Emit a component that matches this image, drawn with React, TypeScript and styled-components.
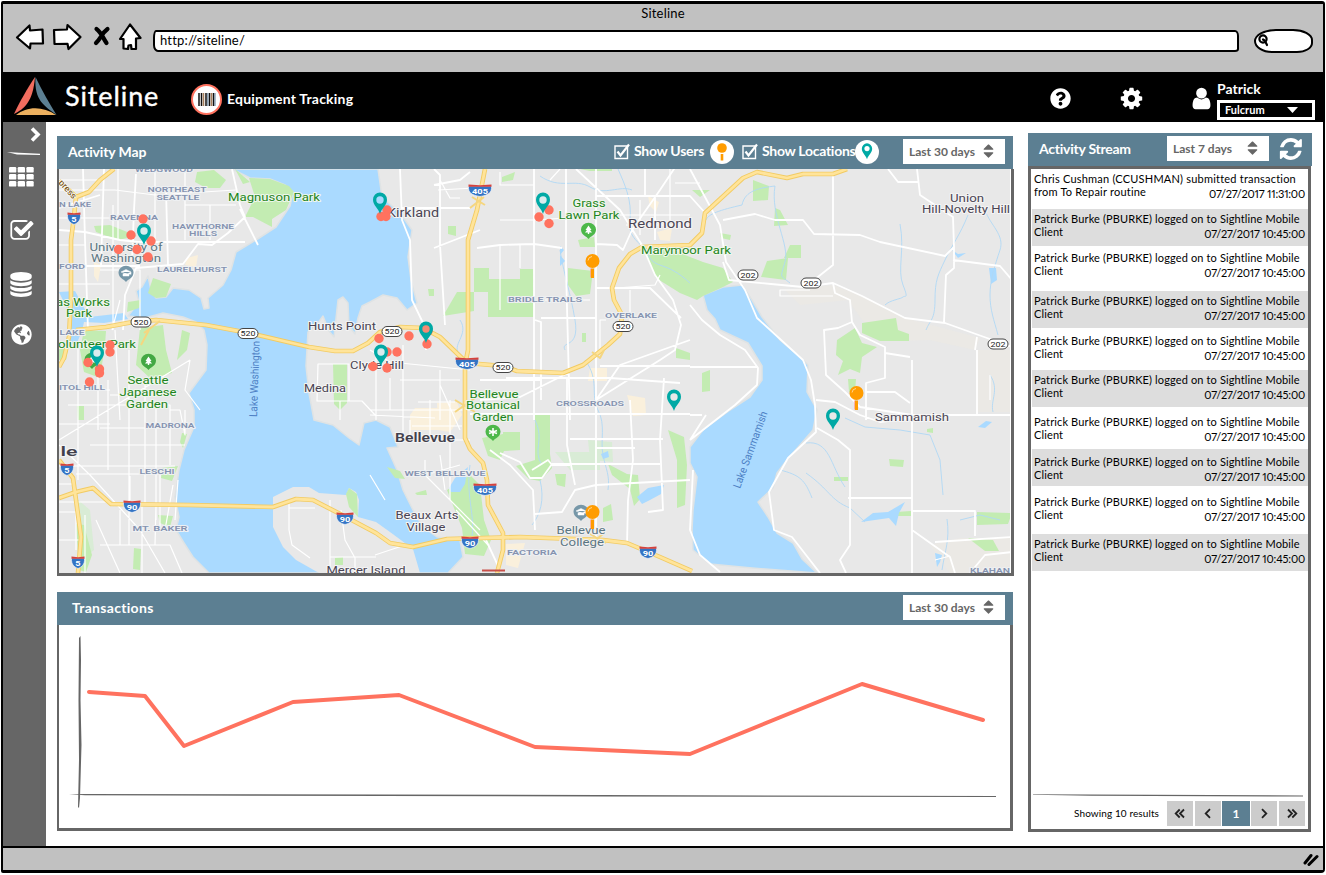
import React from "react";
import styled, { createGlobalStyle } from "styled-components";
import { FaQuestionCircle, FaGlobeAmericas } from "react-icons/fa";

const C = { steel: "#5c7f92", coral: "#ff725f", teal: "#00a9a5", orange: "#ff9c00", line: "#666", chrome: "#c1c1c1" };

const GlobalStyle = createGlobalStyle`
  * { box-sizing: border-box; }
  body { margin: 0; background: #fff; font-family: Lato, "Liberation Sans", sans-serif; color: #000; }
  svg { display: block; flex: none; }
`;

/* ---------- window chrome ---------- */
const Window = styled.div`
  width: 1326px; height: 875px; padding: 1px 0 2px 1px; overflow: hidden;
`;
const Frame = styled.div`
  width: 1324px; height: 872px; display: flex; flex-direction: column;
  border: solid #000; border-width: 3px 2px 3px 2px; border-radius: 2px 3px 4px 2px;
`;
const Chrome = styled.div`
  height: 68px; flex: none; background: ${C.chrome}; display: flex; flex-direction: column;
`;
const WindowTitle = styled.div`
  height: 19px; line-height: 18px; text-align: center; font-size: 13px; letter-spacing: 0.2px;
`;
const NavRow = styled.div`
  display: flex; align-items: center; height: 29px; padding: 0 9px 0 12px;
`;
const NavIcons = styled.div`
  margin-top: -2px;
`;
const UrlBar = styled.div`
  width: 1086px; height: 22px; margin: 6px 0 0 11px; padding-left: 5px;
  border: 2px solid #000; border-radius: 3px 4px 4px 5px / 8px 6px 3px 7px;
  background: #fff; font-size: 13px; line-height: 17px; letter-spacing: 0.2px;
`;
const SearchBox = styled.div`
  width: 59px; height: 24px; margin: 6px 0 0 15px; padding-left: 2px; display: flex; align-items: center;
  background: #fff; border: 2px solid #000; border-radius: 22px 20px 16px 18px / 12px 11px 10px 12px;
`;
const Header = styled.header`
  height: 50px; flex: none; background: #000; color: #fff; display: flex; align-items: center; padding-left: 11px;
`;
const Brand = styled.div`
  margin: -2px 0 0 8px; width: 126px; font-size: 27px; line-height: 34px; letter-spacing: 0.9px; -webkit-text-stroke: 0.4px #fff;
`;
const Badge = styled.div`
  width: 31px; height: 31px; margin-top: 5px; border-radius: 50%; background: #fff; border: 2px solid ${C.coral};
  display: flex; align-items: center; justify-content: center;
`;
const AppName = styled.div`
  margin: 2px 0 0 5px; width: 822px; font-size: 14px; font-weight: 700; letter-spacing: 0.2px;
`;
const HeaderIcon = styled.div<{ $gap: number }>`
  width: 22px; margin: 2px ${(p) => p.$gap}px 0 0; display: flex; justify-content: center;
`;
const Account = styled.div`
  width: 98px; display: flex; flex-direction: column; font-weight: 700; font-size: 14px; line-height: 18px; padding-top: 6px;
`;
const AccountSelect = styled.div`
  height: 20px; margin-top: 2px; padding: 0 14px 0 5px; border: 3px solid #fff; font-size: 11px;
  display: flex; align-items: center; justify-content: space-between;
`;
const Body = styled.div`
  flex: 1; display: flex; min-height: 0;
`;
const Sidebar = styled.nav`
  width: 43px; background: #666; color: #fff; display: flex; flex-direction: column; padding-left: 4px;
`;
const SideItem = styled.div<{ $top: number; $left?: number }>`
  margin-top: ${(p) => p.$top}px; margin-left: ${(p) => p.$left ?? 2}px;
`;
const StatusBar = styled.footer`
  height: 24px; flex: none; background: ${C.chrome}; border-top: 2.5px solid #000;
  display: flex; justify-content: flex-end; align-items: center; padding-right: 4px;
`;

/* ---------- panels ---------- */
const Main = styled.main`
  flex: 1; display: flex; gap: 15px; padding: 0 0 0 11px;
`;
const Column = styled.div`
  width: 956px; display: flex; flex-direction: column; gap: 16px; padding-top: 14px;
`;
const SideColumn = styled.div`
  width: 284px; padding-top: 11px;
`;
const Panel = styled.section<{ $h: number }>`
  height: ${(p) => p.$h}px; display: flex; flex-direction: column;
`;
const PanelHead = styled.div<{ $left: number; $right: number }>`
  height: 33px; flex: none; background: ${C.steel}; color: #fff; display: flex; align-items: center;
  padding: 0 ${(p) => p.$right}px 2px ${(p) => p.$left}px; font-size: 14px; font-weight: 700;
`;
const PanelTitle = styled.h2<{ $ls: number }>`
  margin: -1px 0 0; font-size: 14px; font-weight: 700; letter-spacing: ${(p) => p.$ls}px;
`;
const Grow = styled.div`
  flex: 1;
`;
const PanelBody = styled.div<{ $w?: string }>`
  flex: 1; width: ${(p) => p.$w ?? "auto"}; background: #fff; border: solid ${C.line}; border-width: 0 3px 3px 2px;
  display: flex; flex-direction: column;
`;
const StreamBody = styled(PanelBody)`
  border-width: 3px; width: 283px; min-height: 0;
`;
const Toggle = styled.label<{ $w: number }>`
  width: ${(p) => p.$w}px; display: flex; align-items: center; gap: 4px; white-space: nowrap;
  letter-spacing: -0.28px; line-height: 16px; margin-top: -1px;
`;
const Disc = styled.div<{ $mr: number }>`
  width: 24px; height: 24px; margin-right: ${(p) => p.$mr}px; border-radius: 50%; background: #fff;
  display: flex; align-items: center; justify-content: center; position: relative;
`;
const Range = styled.div`
  width: 102px; height: 25px; background: #fff; color: #666; padding: 0 11px 1px 6px; font-size: 12px;
  display: flex; align-items: center; justify-content: space-between; white-space: nowrap;
`;

/* ---------- activity stream ---------- */
const Entry = styled.div<{ $top: number; $shade: boolean; $ls: number }>`
  height: 37px; flex: none; margin: ${(p) => p.$top}px 0 0 1px; padding: 3px 3px 0 2px;
  background: ${(p) => (p.$shade ? "#ddd" : "#fff")}; font-size: 11px; line-height: 13px; white-space: nowrap;
  letter-spacing: ${(p) => p.$ls}px;
`;
const EntryLine = styled.div`
  display: flex; justify-content: space-between;
`;
const Stamp = styled.span`
  padding-top: 2px; letter-spacing: -0.18px; font-variant-numeric: proportional-nums;
`;
const Pager = styled.div`
  display: flex; align-items: center; gap: 2px; height: 25px; margin: 4px 3px 3px 0; font-size: 10px;
`;
const PagerText = styled.div`
  flex: 1; text-align: right; padding: 0 6px 2px 0; letter-spacing: 0.1px;
`;
const PageButton = styled.div<{ $on?: boolean }>`
  width: ${(p) => (p.$on ? 28 : 26)}px; margin: ${(p) => (p.$on ? "0 -1px" : "0")}; height: 25px; display: flex; align-items: center; justify-content: center;
  background: ${(p) => (p.$on ? C.steel : "#ccc")}; color: ${(p) => (p.$on ? "#fff" : "#222")}; font-size: 12px; font-weight: 700;
`;

/* ---------- icons ---------- */
const Glyph = ({ d, size, h, box = "0 0 1792 1792" }: { d: string; size: number; h?: number; box?: string }) => (
  <svg width={size} height={h ?? size} viewBox={box} fill="currentColor"><path d={d} /></svg>
);
const COG = "M1152 896q0-106-75-181t-181-75-181 75-75 181 75 181 181 75 181-75 75-181zm512-109v222q0 12-8 23t-20 13l-185 28q-19 54-39 91 35 50 107 138 10 12 10 25t-9 23q-27 37-99 108t-94 71q-12 0-26-9l-138-108q-44 23-91 38-16 136-29 186-7 28-36 28h-222q-14 0-24.5-8.5t-11.5-21.5l-28-184q-49-16-90-37l-141 107q-10 9-25 9-14 0-25-11-126-114-165-168-7-10-7-23 0-12 8-23 15-21 51-66.5t54-70.5q-27-50-41-99l-183-27q-13-2-21-12.5t-8-23.5v-222q0-12 8-23t19-13l186-28q14-46 39-92-40-57-107-138-10-12-10-24 0-10 9-23 26-36 98.5-107.5t94.5-71.5q13 0 26 10l138 107q44-23 91-38 16-136 29-186 7-28 36-28h222q14 0 24.5 8.5t11.5 21.5l28 184q49 16 90 37l142-107q9-9 24-9 13 0 25 10 129 119 165 170 7 8 7 22 0 12-8 23-15 21-51 66.5t-54 70.5q26 50 41 98l183 28q13 2 21 12.5t8 23.5z";
const USER = "M1536 1399q0 109-62.5 187t-150.5 78h-854q-88 0-150.5-78t-62.5-187q0-85 8.5-160.5t31.5-152 58.5-131 94-89 134.5-34.5q131 128 313 128t313-128q76 0 134.5 34.5t94 89 58.5 131 31.5 152 8.5 160.5zm-256-887q0 159-112.5 271.5t-271.5 112.5-271.5-112.5-112.5-271.5 112.5-271.5 271.5-112.5 271.5 112.5 112.5 271.5z";
const CHECK = "M1472 930v318q0 119-84.5 203.5t-203.5 84.5h-832q-119 0-203.5-84.5t-84.5-203.5v-832q0-119 84.5-203.5t203.5-84.5h832q63 0 117 25 15 7 18 23 3 17-9 29l-49 49q-10 10-23 10-3 0-9-2-23-6-45-6h-832q-66 0-113 47t-47 113v832q0 66 47 113t113 47h832q66 0 113-47t47-113v-254q0-13 9-22l64-64q10-10 23-10 6 0 12 3 20 8 20 29zm231-489l-814 814q-24 24-57 24t-57-24l-430-430q-24-24-24-57t24-57l110-110q24-24 57-24t57 24l263 263 647-647q24-24 57-24t57 24l110 110q24 24 24 57t-24 57z";
const DATABASE = "M896 768q237 0 443-43t325-127v170q0 69-103 128t-280 93.5-385 34.5-385-34.5-280-93.5-103-128v-170q119 84 325 127t443 43zm0 768q237 0 443-43t325-127v170q0 69-103 128t-280 93.5-385 34.5-385-34.5-280-93.5-103-128v-170q119 84 325 127t443 43zm0-384q237 0 443-43t325-127v170q0 69-103 128t-280 93.5-385 34.5-385-34.5-280-93.5-103-128v-170q119 84 325 127t443 43zm0-1152q208 0 385 34.5t280 93.5 103 128v128q0 69-103 128t-280 93.5-385 34.5-385-34.5-280-93.5-103-128v-128q0-69 103-128t280-93.5 385-34.5z";
const SORT = "M1408 1088q0 26-19 45l-448 448q-19 19-45 19t-45-19l-448-448q-19-19-19-45t19-45 45-19h896q26 0 45 19t19 45zm0-384q0 26-19 45t-45 19h-896q-26 0-45-19t-19-45 19-45l448-448q19-19 45-19t45 19l448 448q19 19 19 45z";
const REFRESH = "M1511 928q0 5-1 7-64 268-268 434.5t-478 166.5q-146 0-282.5-55t-243.5-157l-129 129q-19 19-45 19t-45-19-19-45v-448q0-26 19-45t45-19h448q26 0 45 19t19 45-19 45l-137 137q71 66 161 102t187 36q134 0 250-65t186-179q11-17 53-117 8-23 30-23h192q13 0 22.5 9.5t9.5 22.5zm25-800v448q0 26-19 45t-45 19h-448q-26 0-45-19t-19-45 19-45l138-138q-148-137-349-137-134 0-250 65t-186 179q-11 17-53 117-8 23-30 23h-199q-13 0-22.5-9.5t-9.5-22.5v-7q65-268 270-434.5t480-166.5q146 0 284 55.5t245 156.5l130-129q19-19 45-19t45 19 19 45z";

const SortIcon = () => <Glyph d={SORT} size={11} h={14} box="384 150 1024 1480" />;

const RangeSelect = ({ label }: { label: string }) => (
  <Range><span>{label}</span><SortIcon /></Range>
);

const CheckBox = () => (
  <svg width="16" height="17" viewBox="0 0 16 17" fill="none" stroke="#fff">
    <path d="M1 3H13.5V15.5H1Z" strokeWidth="1.4" />
    <path d="M3.5 8.5 6.5 12.5 15 1.5" strokeWidth="2.2" />
  </svg>
);

const PIN = "M0 0C-1.6-6-7-8.500-7-14.300A7 7.300 0 0 1 7-14.300C7-8.500 1.600-6 0 0Z";
const LocationPin = ({ x, y, hole = "#d8ecee" }: { x: number; y: number; hole?: string }) => (
  <g transform={`translate(${x} ${y})`}>
    <path d={PIN} fill={C.teal} />
    <circle cy="-14" r="3.700" fill={hole} />
  </g>
);
const UserPin = ({ x, y }: { x: number; y: number }) => (
  <g transform={`translate(${x} ${y})`}>
    <rect x="-2.200" y="7.500" width="1" height="9" fill="#ff9a8a" />
    <rect x="-1.500" y="7.500" width="3" height="9.500" fill={C.orange} />
    <circle r="7" fill={C.orange} />
    <path d="M-4.500-.5A4.500 4.500 0 0 1-.5-4.500" fill="none" stroke="#ffd591" strokeWidth="1" />
  </g>
);

/* ---------- map ---------- */
const LAKE_WASHINGTON =
  "M232 169 250 178 270 179 285 185 293 192 290 206 276 227 256 240 236 252 231 270 223 285 208 298 209 308 204 309 201 298 189 290 173 288 166 297 156 298 151 290 148 276 142 287 136 291 139 302 128 316 145 318 163 313 183 317 196 322 204 330 207 345 206 370 189 393 194 410 194 427 184 450 179 470 175 497 179 517 176 530 184 543 193 557 209 573 448 573 463 557 460 540 437 537 423 527 413 510 403 490 397 470 387 448 398 447 390 427 376 420 364 423 359 445 349 438 333 425 314 420 309 393 306 366 308 332 318 323 323 316 329 331 334 337 338 300 343 297 348 303 349 326 355 334 358 318 362 306 370 302 383 295 397 298 407 310 417 303 411 280 408 257 412 230 400 213 382 197 378 169Z";
const MERCER = "M273 497 293 487 309 487 319 493 346 495 349 488 356 492 359 500 358 517 376 522 390 532 413 549 420 573 319 573 296 560 283 547 273 527Z";
const SAMMAMISH =
  "M703 295 723 287 742 285 752 300 762 317 780 340 800 357 808 365 807 392 817 410 813 430 787 460 777 473 773 488 758 502 768 517 777 533 793 543 802 559 817 573 752 568 710 564 693 550 692 530 693 510 697 477 690 463 690 447 703 430 730 410 750 397 762 380 762 366 748 343 720 330 715 319 707 310Z";
const PONDS = [
  "M59 292 75 291 89 317 124 313 128 319 104 323 84 322 82 331 76 345 69 343 70 315Z",
  "M449 488 455 478 468 467 465 484 460 492 451 492Z",
  "M637 497 648 488 664 485 661 494 650 500 642 504Z",
  "M861 522 873 513 888 512 905 502 899 513 896 526 889 518Z",
  "M978 427 986 421 992 422 985 428Z", "M989 268 996 268 997 280 991 284Z", "M952 250 958 254 966 253 958 258Z",
  "M935 553 942 555 940 562 937 567Z", "M601 454 608 451 609 457 603 459Z", "M560 246 564 250 560 255 565 261 560 266Z",
];
const GREENS = [
  "M249 178 270 179 289 186 294 192 286 210 272 219 272 227 253 217 245 217 255 197Z", "M197 172 214 170 226 180 220 188 206 188 195 182Z",
  "M235 169 250 182 243 184Z", "M94 226 110 225 137 236 118 240 96 232Z", "M153 278 171 284 166 297 156 298 148 293Z",
  "M128 302 141 300 139 308 127 312Z", "M84 330 106 331 105 345 100 378 84 372 80 350Z", "M140 328 163 325 166 350 172 373 151 379 136 365Z",
  "M182 330 190 333 187 350 177 360 180 343Z", "M59 349 68 349 66 360 59 360Z", "M77 406 84 406 84 420 78 420Z", "M182 433 187 434 183 448 180 442Z",
  "M162 468 178 466 172 481 161 478Z", "M158 515 173 516 170 527 160 523Z", "M76 524 84 525 92 555 86 572 79 570Z", "M134 548 141 549 140 570 133 569Z",
  "M333 364 347 364 347 403 340 410 334 404Z", "M346 494 349 488 357 494 358 517 349 507Z", "M335 558 343 557 343 565 335 565Z",
  "M474 268H489V279H520V269H534V317H488V292H474Z", "M457 292 474 292 474 311 443 316Z", "M568 268 593 271 590 294 576 296 568 285Z",
  "M502 177 515 172 513 180 502 182Z", "M448 226 456 226 456 236 448 234Z", "M578 240 594 237 595 247 580 247Z", "M580 169H612V171H590Z",
  "M535 415H550V454L552 468 540 481 529 479 516 466 535 460Z", "M482 438 503 434 503 432 520 432 520 450 504 451 500 460 488 456Z",
  "M447 490 470 475 480 485 484 520 491 540 484 556 465 554 462 528 454 508Z", "M603 508 611 504 613 520 603 522Z",
  "M608 464 627 474 638 475 640 499 634 506 630 489 612 475Z", "M668 430 684 437 687 465 685 505 677 508 677 460Z", "M555 474 566 474 565 487 557 485Z",
  "M643 249 662 245 685 255 703 262 723 268 733 282 723 287 703 296 697 300 680 293 656 278Z", "M753 180 769 186 768 200 753 201Z",
  "M767 261 788 258 786 280 761 277Z", "M775 208 780 210 788 225 774 226Z", "M790 245 801 245 801 258 784 258Z",
  "M692 190 710 190 700 197Z", "M720 233 731 235 730 240 721 238Z", "M862 323 896 318 898 330 909 334 909 341 880 341 862 333Z",
  "M837 340 855 328 862 343 877 347 862 357 860 373 850 369 838 375 843 361 836 355Z", "M848 379 856 379 855 393 849 392Z",
  "M889 459 904 460 903 467 890 466Z", "M896 512 911 511 911 516 896 516Z", "M977 512 1012 513 1008 524 977 525Z", "M968 538 993 540 999 551 985 551Z",
  "M702 373 710 370 710 391 702 392Z", "M834 477 848 477 848 481 834 481Z", "M927 429 933 428 933 433 927 432Z",
  "M676 348 690 353 690 360 676 358Z", "M428 289 434 289 434 296 429 296Z", "M582 333H586V342H582Z", "M387 467 400 471 405 479 395 478Z", "M415 493 426 490 427 495 417 495Z",
];
const SANDS = ["M415 408H440V430H410V415ZM437 403 457 402 462 415 450 432 438 430Z", "M590 368H607V381H588ZM627 395 645 398 646 415 633 416Z", "M506 544 525 543 518 568 506 565Z",
  "M648 196 659 202 656 212 650 206ZM657 232 672 228 670 241 660 240Z", "M94 262 101 265 98 282 94 276Z", "M315 511 330 511 338 521 328 524Z", "M187 258 198 255 196 267 185 265Z"];
const STREAMS = "M540 176C560 190 575 178 590 187S620 185 632 190M618 169C625 185 632 200 630 220S640 240 648 255 665 260 690 283M742 205C745 190 760 188 775 186M742 205C720 210 708 214 706 220M775 186C770 215 790 245 785 262S780 275 790 283M900 224C905 250 897 270 903 285S905 295 903 297 890 300 885 305M968 215C960 235 952 245 945 260S935 280 935 300 930 320 926 330M985 210C990 225 1005 235 1000 250S990 280 990 295 994 320 998 335M845 418 865 427 900 430 930 435 940 460 943 495M806 443C830 440 830 465 845 487M780 470C800 475 805 480 812 498M806 473C830 490 830 500 850 508L865 522M535 420C545 440 532 450 542 465M460 320C470 335 450 345 460 355M560 250C565 280 570 290 575 320S560 340 565 350M585 360C600 380 590 395 598 410S600 440 603 455 610 475 608 490M1000 520 980 515 960 520M540 480C545 500 540 515 532 525M470 465C465 500 478 520 470 545M947 519C950 540 945 550 942 570M990 375C1000 390 990 400 993 412";
const ROADS_MAJOR =
  "M59 208 100 195 M232 169 240 205 245 217 228 233 212 245 198 244 183 264 136 268 125 295 123 330 M83 169 85 240 88 330 M59 230 85 232 120 240 138 242 245 242 M240 209 258 245 M136 174 134 210 132 262 M59 266 140 266 M166 190 168 265 M104 169 101 265" +
  "M480 230 434 248 M400 169 402 220 410 240 412 300 424 325 426 350 M402 208H470 M434 169 440 175 440 245 445 325 M434 185 460 180 470 172 M477 248 500 245 534 244 562 248 M534 169V420 M535 320 541 322 541 400 M566 169V270L570 420 M596 169V540 M541 318H596V220 M596 244 617 245 623 250 632 230 660 190 680 160" +
  "M596 288H650L681 318 M576 169 620 210 642 245 655 275 673 300 681 325 675 350 660 360 596 400 M690 169 720 225 726 262 745 290 757 318 803 360 811 380 815 405 816 432 788 458 769 492 774 530 792 537 820 573" +
  "M596 196 690 196 707 215 M645 169V196 M655 196V240 M660 250 640 245 M723 262 729 280 771 284 803 287 833 283 862 296 905 318 945 323 987 338 1012 347" +
  "M723 220 755 214 775 220H803L814 234 860 235 880 242 945 256 954 247 953 217 920 195 917 169 M833 175V265L814 280 M954 247V268L946 275 944 322 M888 169 898 182H919 M953 260 1000 266 1012 280 M833 283 835 293 850 300 852 322 838 328 824 330 826 375 845 392 860 407 912 415 M852 322 860 335 885 347 885 378 866 383 866 420 M866 392H895L910 403 M912 360V573 M885 353 910 357 M912 415H1012 M977 350V416 M977 337 975 350 M848 498H912 M846 573 840 560 850 545V450L838 440 817 428 M816 400 835 402 860 415 880 422 912 418 M912 511H975V536 M912 530 950 557 955 573 M935 542 1012 537 M970 573 985 555 1012 552" +
  "M690 367H758 M690 415H702 M690 440 706 415 M690 305 702 320 720 335 745 350 758 368 757 385 735 405 690 440 M693 470 690 530 700 555 720 572" +
  "M470 414H690 M506 378H610L680 383 M480 400 520 397 570 372 M596 400 620 365 690 340 M664 378 660 440 663 510 648 512 M630 400 633 460 628 500 627 545 M535 514 562 512 575 490 596 485 690 480 M532 470 548 460 552 465H570 M567 378V445L575 485 M500 453 520 462 530 478 542 478 552 464H660 M570 439H663 M535 530 533 490 510 465 490 450 M486 540 500 570 M596 448H635 M690 366H600 M480 380H540";
const ROADS_MINOR =
  "M59 190H115L155 195 236 190 M59 218H150 M155 169V240 M185 169V240 M185 205H236 M210 205V240 M118 169V240 M59 180H100M113 205V330 M59 245H85 M100 270H140V330 M59 284H110 M120 300 112 330" +
  "M59 440 190 360 M59 424H110 M68 405H170V465 M78 345V480 M98 365V430 M115 330 120 420 M129 350V545 M145 380V505 M156 405V520 M100 428H190 M59 466H175 M76 474H160V530 M59 484H76 M59 502H110 M130 476V500 M120 510V545 M142 505V573 M156 505 155 545 M170 410H180L185 435V410 M100 545H170L182 573 M96 520 120 573 M59 445 90 475 140 530 165 573 M59 512H76V550 M59 540H80 M85 515V573 M108 380V470 M59 390H110 M190 360 185 390 200 410 M178 480 175 520 M90 445H185 M110 395H140 M173 485 165 530" +
  "M318 364H349V401H317Z M349 401H362L376 416 M376 380V420 M340 401V420 M289 500V530L292 545 310 558 M330 500V573 M341 510 345 540 355 558V573 M289 508H315 M330 557H376 M376 350V420 M390 378V410 M403 345V440 M370 350 390 362 470 370 M370 410H470 M410 420V440H470 M430 400V440 M440 370V420 M450 400V500 M370 415 435 418 M425 460V475L445 495 480 530 M440 455 445 490 M370 475 385 500 M425 475 460 465 M440 385 460 430 M400 380H460 M418 402H455 M412 426H462 M456 510 488 545 M375 555 405 545 M550 180 560 169 M440 180 450 198H460 M438 190 475 188" +
  "M500 172V185H534 M500 220H534 M534 220 566 218 M500 245V310 M520 268V244 M606 320H600V350 M617 288 655 285 660 275 M640 200V235 M620 215H690 M626 225H690 M670 169V220 M990 375V400 M935 560 950 556 M675 183H700 M810 290H780V296H833 M630 290V325 M545 300H590";

type LabelProps = { x: number; y: number; w: number; t: string; k: "area" | "town" | "park" | "poi" | "city"; s?: number };
const LABEL_STYLE = {
  area: { fill: "#8593b0", weight: 600, size: 8, halo: "#eef0f2" },
  town: { fill: "#4a4453", weight: 400, size: 11, halo: "#f4f4f4" },
  park: { fill: "#1e8421", weight: 400, size: 11, halo: "#eef6ec" },
  poi: { fill: "#5b7683", weight: 400, size: 11, halo: "#f0f0f0" },
  city: { fill: "#42404c", weight: 600, size: 13.5, halo: "#f4f4f4" },
};
const LABELS: LabelProps[] = [
  { x: 164, y: 172, w: 58, t: "WEDGWOOD", k: "area" }, { x: 177, y: 192, w: 59, t: "NORTHEAST", k: "area" }, { x: 178, y: 200, w: 43, t: "SEATTLE", k: "area" },
  { x: 75, y: 207, w: 32, t: "N LAKE", k: "area" }, { x: 134, y: 220, w: 48, t: "RAVENNA", k: "area" }, { x: 203, y: 228.500, w: 62, t: "HAWTHORNE", k: "area" },
  { x: 203, y: 236, w: 28, t: "HILLS", k: "area" }, { x: 72, y: 269, w: 26, t: "FORD", k: "area" }, { x: 192, y: 272, w: 70, t: "LAURELHURST", k: "area" },
  { x: 72, y: 335, w: 25, t: "LAKE", k: "area" }, { x: 82, y: 390, w: 46, t: "ITOL HILL", k: "area" }, { x: 170, y: 428, w: 49, t: "MADRONA", k: "area" },
  { x: 157, y: 473.500, w: 35, t: "LESCHI", k: "area" }, { x: 160, y: 531, w: 55, t: "MT. BAKER", k: "area" }, { x: 545, y: 302, w: 74, t: "BRIDLE TRAILS", k: "area" },
  { x: 631, y: 318, w: 52, t: "OVERLAKE", k: "area" }, { x: 590, y: 406, w: 68, t: "CROSSROADS", k: "area" }, { x: 445, y: 476, w: 81, t: "WEST BELLEVUE", k: "area" },
  { x: 532, y: 555, w: 50, t: "FACTORIA", k: "area" }, { x: 990, y: 573, w: 40, t: "KLAHAN", k: "area" },
  { x: 126, y: 251, w: 73, t: "University of", k: "poi" }, { x: 126, y: 262, w: 70, t: "Washington", k: "poi" },
  { x: 581, y: 534, w: 49, t: "Bellevue", k: "poi" }, { x: 582, y: 545.500, w: 44, t: "College", k: "poi" },
  { x: 274, y: 201, w: 92, t: "Magnuson Park", k: "park" }, { x: 83, y: 305.500, w: 54, t: "as Works", k: "park" }, { x: 79, y: 317, w: 26, t: "Park", k: "park" },
  { x: 97, y: 348, w: 78, t: "olunteer Park", k: "park" }, { x: 148, y: 384, w: 41, t: "Seattle", k: "park" }, { x: 148, y: 396, w: 57, t: "Japanese", k: "park" }, { x: 147, y: 407.500, w: 42, t: "Garden", k: "park" },
  { x: 589, y: 207, w: 33, t: "Grass", k: "park" }, { x: 589, y: 219, w: 61, t: "Lawn Park", k: "park" }, { x: 686, y: 254, w: 90, t: "Marymoor Park", k: "park" },
  { x: 494, y: 397.500, w: 49, t: "Bellevue", k: "park" }, { x: 493, y: 409, w: 54, t: "Botanical", k: "park" }, { x: 493, y: 420.500, w: 41, t: "Garden", k: "park" },
  { x: 413, y: 217, w: 52, t: "Kirkland", k: "town", s: 12 }, { x: 660, y: 227.500, w: 64, t: "Redmond", k: "town", s: 12 }, { x: 967, y: 202, w: 34, t: "Union", k: "town" },
  { x: 966, y: 213, w: 88, t: "Hill-Novelty Hill", k: "town" }, { x: 342, y: 330, w: 68, t: "Hunts Point", k: "town" }, { x: 377, y: 368.500, w: 54, t: "Clyde Hill", k: "town" },
  { x: 325, y: 392, w: 42, t: "Medina", k: "town" }, { x: 912, y: 421, w: 74, t: "Sammamish", k: "town" }, { x: 427, y: 519, w: 63, t: "Beaux Arts", k: "town" },
  { x: 426, y: 531, w: 39, t: "Village", k: "town" }, { x: 366, y: 574, w: 79, t: "Mercer Island", k: "town" },
  { x: 425, y: 442, w: 60, t: "Bellevue", k: "city" }, { x: 69, y: 456, w: 17, t: "le", k: "city" },
];
const MapLabel = ({ x, y, w, t, k, s }: LabelProps) => {
  const st = LABEL_STYLE[k];
  return (
    <text x={x} y={y} textLength={w} lengthAdjust="spacingAndGlyphs" textAnchor="middle" fontSize={s ?? st.size} fontWeight={st.weight}
      fill={st.fill} stroke={st.halo} strokeWidth="2" paintOrder="stroke" strokeLinejoin="round">{t}</text>
  );
};
const Interstate = ({ x, y, n }: { x: number; y: number; n: string }) => {
  const w = n.length === 3 ? 11.500 : n.length === 2 ? 8.500 : 6.500;
  return (
    <g transform={`translate(${x} ${y})`}>
      <path d={`M${-w}-4H${w}C${w + 0.5} 3 ${w - 3} 5 0 6.500C${3 - w} 5 ${-w - 0.5} 3 ${-w}-4Z`} fill="#3474c4" stroke="#fff" strokeWidth=".6" />
      <path d={`M${-w}-3.300V-5.500L0-4.800 ${w}-5.500V-3.300Z`} fill="#d6413c" />
      <text y="3.800" textAnchor="middle" fontSize="8" fontWeight="700" fill="#fff" textLength={n.length * 5.300} lengthAdjust="spacingAndGlyphs">{n}</text>
    </g>
  );
};
const StateRoute = ({ x, y, n }: { x: number; y: number; n: string }) => (
  <g transform={`translate(${x} ${y})`}>
    <rect x="-10" y="-5" width="20" height="10" rx="5" fill="#fff" stroke="#444" />
    <text y="2.800" textAnchor="middle" fontSize="8" fill="#222" textLength="15" lengthAdjust="spacingAndGlyphs">{n}</text>
  </g>
);
const Poi = ({ x, y, fill, kind }: { x: number; y: number; fill: string; kind: "tree" | "school" | "flower" }) => (
  <g transform={`translate(${x} ${y})`}>
    <path d="M0 9C-2 6-7.500 5-7.500-.5A7.500 6.800 0 0 1 7.500-.5C7.500 5 2 6 0 9Z" fill={fill} />
    {kind === "tree" && <path d="M0-4.500 3 0H1.500L3.500 2.500H.7V4H-.7V2.500H-3.500L-1.500 0H-3Z" fill="#fff" />}
    {kind === "school" && <path d="M-5-1 0-3.500 5-1V1.500M-5-1 0 1.500 5-1M-3 1V3H3V1Z" fill="#fff" stroke="#fff" strokeWidth=".5" />}
    {kind === "flower" && <path d="M0-4V4M-4-1.500 4 1.500M-4 1.500 4-1.500" stroke="#fff" strokeWidth="1.600" />}
  </g>
);

const HIGHWAYS = [
  "M59 181 76 197 74 217 71 240 71 297 69 337 64 358 59 367", "M76 197 89 192 100 180 114 169",
  "M59 460 73 478 76 500 81 537 78 573",
  "M76 330 106 327 133 322 156 320 206 325 249 333 309 347 335 351 353 351 368 343 380 332 400 327 423 328 440 337 467 363",
  "M467 363 503 366 517 371 563 373 583 365 608 345 620 334 622 315 614 300 612 288 619 268 630 254 642 247 690 245 702 233 705 213 743 178 757 172 787 178 803 174 833 174 847 169",
  "M485 169 477 210 468 240 468 350 465 365 465 438 470 449 483 463 487 480 488 505 503 533 503 550 497 573",
  "M59 498 76 492 93 488 111 504 189 505 273 507 296 499 313 500 346 517 376 533 390 543 413 547 447 539 520 537 603 540 627 543 660 557 692 571",
];
const DOTS = [[143, 219], [131, 235], [151, 241], [118.500, 249.500], [137, 249.500], [148, 257], [110, 345], [110, 352], [88, 362.500], [99.500, 369], [99.500, 373], [89.500, 382],
  [387, 210], [381, 216.500], [386, 216.500], [549, 210], [539, 217], [549, 223.500], [428, 331], [409, 336], [427, 344], [379, 338.500], [387, 352], [397, 352], [373, 366.500], [387, 368]];

const ActivityMap = () => (
  <svg width="951" height="404" viewBox="59 169 951 404" fontFamily="Roboto, sans-serif" strokeLinejoin="round">
    <rect x="59" y="169" width="953" height="404" fill="#e8e8e8" />
    <path d="M785 290 833 285 862 296 905 318 980 338 975 350 930 340 897 341 862 320 848 300 800 305Z" fill="#ebe9e5" />
    <path d="M977 350H1012V412H977ZM930 545 960 538H1012V573H950Z" fill="#ebe9e5" />
    <path d="M555 452H600V470H570ZM588 440 612 442 613 462 590 460ZM76 498 90 510 94 550 82 560Z" fill="#d9ecd6" />
    {SANDS.map((d) => <path key={d} d={d} fill="#faf0dc" />)}
    <g fill="#aadaff" stroke="#dfe3e4" strokeWidth="1.500">
      <path d={LAKE_WASHINGTON} /><path d={SAMMAMISH} />
    </g>
    <path d={MERCER} fill="#e8e8e8" />
    {GREENS.map((d) => <path key={d} d={d} fill="#c3ecb2" />)}
    {PONDS.map((d) => <path key={d} d={d} fill="#aadaff" />)}
    <path d={STREAMS} fill="none" stroke="#b0d8f5" strokeWidth=".9" />
    <path d={ROADS_MINOR} fill="none" stroke="#fff" strokeWidth="1.200" />
    <path d={ROADS_MAJOR} fill="none" stroke="#fff" strokeWidth="1.800" />
    {HIGHWAYS.map((d) => <path key={d} d={d} fill="none" stroke="#f2cb63" strokeWidth="4.600" />)}
    {HIGHWAYS.map((d) => <path key={d} d={d} fill="none" stroke="#ffe49a" strokeWidth="2.800" />)}
    <path d="M144 333 160 321M141 345 149 330M592 352 600 358 604 350M455 400 475 412M455 412 475 398M472 197 485 205M484 197 470 208M590 534 606 543M604 533 590 545" stroke="#f5d67f" strokeWidth="2" fill="none" />
    {LABELS.map((l) => <MapLabel key={`${l.t}${l.x}${l.y}`} {...l} />)}
    <text transform="translate(58 183) rotate(48)" fontSize="9" fill="#7c5a1c" fontWeight="500" stroke="#fff" strokeWidth="1.500" paintOrder="stroke">press</text>
    <g fill="#4d7fc4" fontSize="11">
      <text transform="translate(257 417) rotate(-88)" textLength="76" lengthAdjust="spacingAndGlyphs">Lake Washington</text>
      <text transform="translate(740 489) rotate(-70)" textLength="81" lengthAdjust="spacingAndGlyphs">Lake Sammamish</text>
    </g>
    <Interstate x={74} y={218} n="5" /><Interstate x={67} y={469} n="5" /><Interstate x={78} y={562} n="5" />
    <Interstate x={132} y={506} n="90" /><Interstate x={345} y={518} n="90" /><Interstate x={470} y={542} n="90" /><Interstate x={648} y={552} n="90" />
    <Interstate x={480} y={190} n="405" /><Interstate x={467} y={363} n="405" /><Interstate x={485} y={489} n="405" />
    <path d="M482 570.500H505" stroke="#c9504a" strokeWidth="2" />
    <StateRoute x={141} y={322} n="520" /><StateRoute x={248} y={333.500} n="520" /><StateRoute x={392} y={331.500} n="520" /><StateRoute x={503} y={367.500} n="520" />
    <StateRoute x={623} y={326.500} n="520" /><StateRoute x={748} y={275} n="202" /><StateRoute x={811} y={283} n="202" /><StateRoute x={998} y={344} n="202" />
    <Poi x={126} y={273} fill="#7697a8" kind="school" /><Poi x={581} y={512} fill="#7697a8" kind="school" />
    <Poi x={148.500} y={361} fill="#43a843" kind="tree" /><Poi x={92} y={360} fill="#43a843" kind="tree" /><Poi x={588.500} y={230} fill="#4db84a" kind="tree" />
    <Poi x={493} y={432} fill="#4db84a" kind="flower" />
    {DOTS.map(([x, y]) => <circle key={`${x}-${y}`} cx={x} cy={y} r="4.700" fill={C.coral} />)}
    <LocationPin x={144} y={245} /><LocationPin x={97} y={367} /><LocationPin x={380} y={214} hole="#aadaff" /><LocationPin x={543} y={214} />
    <LocationPin x={426} y={343} hole="#f58a73" /><LocationPin x={381} y={366} /><LocationPin x={674} y={411} hole="#e8e8e8" /><LocationPin x={833} y={430} hole="#e8e8e8" />
    <UserPin x={592.500} y={261} /><UserPin x={856.500} y={393} /><UserPin x={592.500} y={512} />
  </svg>
);

const TransactionsChart = () => (
  <svg width="951" height="203" viewBox="59 625 951 203" fill="none">
    <path d="M79 638 80.500 636 81 660 80.500 700 81.500 745 80.500 780 80 798 79 808 78 807 79 760 78.500 700Z" fill={C.line} />
    <path d="M69 794.300 85 794 250 794.300 600 795 996 796V797L600 796.500 250 795.700 85 795.200Z" fill={C.line} />
    <path d="M89 692 145 696 184 746 293 702 399 695 535 747 690 754 862 684 983 720" stroke={C.coral} strokeWidth="4" strokeLinecap="round" strokeLinejoin="round" />
  </svg>
);

const BurkeEntry = { lines: ["Patrick Burke (PBURKE) logged on to Sightline Mobile", "Client"], time: "07/27/2017 10:45:00", ls: 0.13 };
const GAPS = [3, 2, 6, 3, 2, 5, 0, 6, 5];
const ENTRIES = [
  { lines: ["Chris Cushman (CCUSHMAN) submitted transaction", "from To Repair routine"], time: "07/27/2017 11:31:00", ls: 0.21, gap: 0 },
  ...GAPS.map((gap) => ({ ...BurkeEntry, gap })),
];
const EntryText = styled.div<{ $drop: number }>`
  padding-top: ${(p) => p.$drop}px;
`;

const Chevrons = ({ dir, n }: { dir: 1 | -1; n: 1 | 2 }) => (
  <svg width="12" height="11" viewBox="-6 -5.500 12 11" fill="none" stroke="#222" strokeWidth="1.800">
    <g transform={`scale(${dir} 1)`}>
      {n === 2 ? <path d="M-4-4 0 0-4 4M.3-4 4.300 0 .3 4" /> : <path d="M-2-4.300 2.300 0-2 4.300" />}
    </g>
  </svg>
);

export default function App() {
  return (
    <Window>
      <GlobalStyle />
      <Frame>
        <Chrome>
          <WindowTitle>Siteline</WindowTitle>
          <NavRow>
            <NavIcons>
              <svg width="127" height="30" viewBox="15 22 127 30" fill="#fff" stroke="#000" strokeWidth="2.200" strokeLinejoin="round" strokeLinecap="round">
                <path d="M17 37.500 29.500 25.500 30 30.500 42.500 29.500 43 43.500 30.500 43.500 30 48.500Z" />
                <path d="M54 30 67 29.500 67.500 25 80.500 37 68.500 49 67.500 43.800 54.500 44Z" />
                <path d="M96.500 29C101 32 103 38 106.500 43M107.500 29C102 33 101 38 96 43" strokeWidth="4.200" />
                <path d="M130 24.500 140.500 38 136 38.500 136 49 131.500 49 131 45 128.500 45.500 128 49 123.500 48.500 123.500 39 120 39Z" />
              </svg>
            </NavIcons>
            <UrlBar>http://siteline/</UrlBar>
            <SearchBox>
              <svg width="11" height="13" viewBox="0 0 11 13" fill="none" stroke="#000" strokeWidth="2.200" strokeLinecap="round"><circle cx="5" cy="5" r="3.600" /><path d="M5 5.500 6.500 6.500M7.500 8 9 11" /></svg>
            </SearchBox>
          </NavRow>
        </Chrome>
        <Header>
          <svg width="43" height="40" viewBox="14 76 43 40">
            <path d="M35 76C27 88 19 102 14 113C24 108 33 101 35 76Z" fill="#f26d5f" />
            <path d="M35.500 76C42 90 50 103 56.500 114C45 105 34 100 35.500 76Z" fill={C.steel} />
            <path d="M16 114C27 105 43 105 56 114Z" fill="#ecb05f" />
          </svg>
          <Brand>Siteline</Brand>
          <Badge>
            <svg width="18" height="14" viewBox="0 0 18 14">
              <path d="M1 0V13M3.500 0V13M8 0V13M11.500 0V13M15.500 0V13" stroke="#111" strokeWidth="1.500" />
              <path d="M5.500 0V13M13.500 0V13" stroke="#a7805d" strokeWidth="1.500" /><path d="M9.800 0V13M17 0V13" stroke="#5c7b95" strokeWidth="1" />
            </svg>
          </Badge>
          <AppName>Equipment Tracking</AppName>
          <HeaderIcon $gap={49}><FaQuestionCircle size={21} /></HeaderIcon>
          <HeaderIcon $gap={48}><Glyph d={COG} size={25} /></HeaderIcon>
          <HeaderIcon $gap={5}><Glyph d={USER} size={25} /></HeaderIcon>
          <Account>
            Patrick
            <AccountSelect>Fulcrum<svg width="11" height="6" viewBox="0 0 11 6"><path d="M0 0H11L5.500 6Z" fill="#fff" /></svg></AccountSelect>
          </Account>
        </Header>
        <Body>
          <Sidebar>
            <SideItem $top={5} $left={23}><svg width="12" height="15" viewBox="0 0 12 15" fill="none" stroke="#fff" strokeWidth="3.600"><path d="M2 1.500 8 7.500 2 13.500" /></svg></SideItem>
            <SideItem $top={10} $left={0}><svg width="33" height="4" viewBox="0 0 33 4" fill="#fff"><path d="M0 0 12 .8 33 1.800V3L10 2.400Z" /></svg></SideItem>
            <SideItem $top={11}>
              <svg width="25" height="20" viewBox="0 0 25 20" fill="#fff">
                {[0, 7, 14].map((y) => [0, 8.700, 17.400].map((x) => <rect key={`${x}-${y}`} x={x} y={y} width="7.300" height="5.600" rx="1.200" />))}
              </svg>
            </SideItem>
            <SideItem $top={33} $left={3}><Glyph d={CHECK} size={24} h={20} box="60 120 1680 1440" /></SideItem>
            <SideItem $top={32} $left={3}><Glyph d={DATABASE} size={22} h={25} box="128 0 1536 1792" /></SideItem>
            <SideItem $top={27} $left={4}><FaGlobeAmericas size={21} /></SideItem>
          </Sidebar>
          <Main>
            <Column>
              <Panel $h={440}>
                <PanelHead $left={11} $right={8}>
                  <PanelTitle $ls={-0.12}>Activity Map</PanelTitle>
                  <Grow />
                  <Toggle $w={96}><CheckBox />Show Users</Toggle>
                  <Disc $mr={8}><svg width="10" height="18" viewBox="-5 -5 10 18"><circle r="4.800" fill={C.orange} /><rect x="-1.300" y="6" width="2.600" height="6.500" fill={C.orange} /></svg></Disc>
                  <Toggle $w={113}><CheckBox />Show Locations</Toggle>
                  <Disc $mr={24}><svg width="12" height="17" viewBox="-8 -22 16 23"><path d={PIN} fill={C.teal} /><circle cy="-14.500" r="3.500" fill="#fff" /></svg></Disc>
                  <RangeSelect label="Last 30 days" />
                </PanelHead>
                <PanelBody $w="957px"><ActivityMap /></PanelBody>
              </Panel>
              <Panel $h={239}>
                <PanelHead $left={15} $right={8}>
                  <PanelTitle $ls={0.3}>Transactions</PanelTitle><Grow /><RangeSelect label="Last 30 days" />
                </PanelHead>
                <PanelBody><TransactionsChart /></PanelBody>
              </Panel>
            </Column>
            <SideColumn>
              <Panel $h={699}>
                <PanelHead $left={11} $right={10}>
                  <PanelTitle $ls={-0.25}>Activity Stream</PanelTitle><Grow /><RangeSelect label="Last 7 days" />
                  <svg width="33" height="22" viewBox="-750 0 2286 1536" fill="#fff"><path d={REFRESH} /></svg>
                </PanelHead>
                <StreamBody>
                  {ENTRIES.map((e, i) => (
                    <Entry key={i} $top={e.gap} $shade={i % 2 === 1} $ls={e.ls}>
                      <EntryText $drop={i === 7 ? 3 : 0}>{e.lines[0]}</EntryText>
                      <EntryLine><span>{e.lines[1]}</span><Stamp>{e.time}</Stamp></EntryLine>
                    </Entry>
                  ))}
                  <Grow />
                  <svg width="272" height="3" viewBox="0 0 272 3"><path d="M2 .3 60 .4 272 1.500V2.600L60 1.800 2 .8Z" fill={C.line} /></svg>
                  <Pager>
                    <PagerText>Showing 10 results</PagerText>
                    <PageButton><Chevrons dir={-1} n={2} /></PageButton>
                    <PageButton><Chevrons dir={-1} n={1} /></PageButton>
                    <PageButton $on>1</PageButton>
                    <PageButton><Chevrons dir={1} n={1} /></PageButton>
                    <PageButton><Chevrons dir={1} n={2} /></PageButton>
                  </Pager>
                </StreamBody>
              </Panel>
            </SideColumn>
          </Main>
        </Body>
        <StatusBar>
          <svg width="16" height="13" viewBox="0 0 16 13" stroke="#000" strokeWidth="3" strokeLinecap="round"><path d="M2 10 8 2.500M6 11.500 14 3.500" /></svg>
        </StatusBar>
      </Frame>
    </Window>
  );
}
